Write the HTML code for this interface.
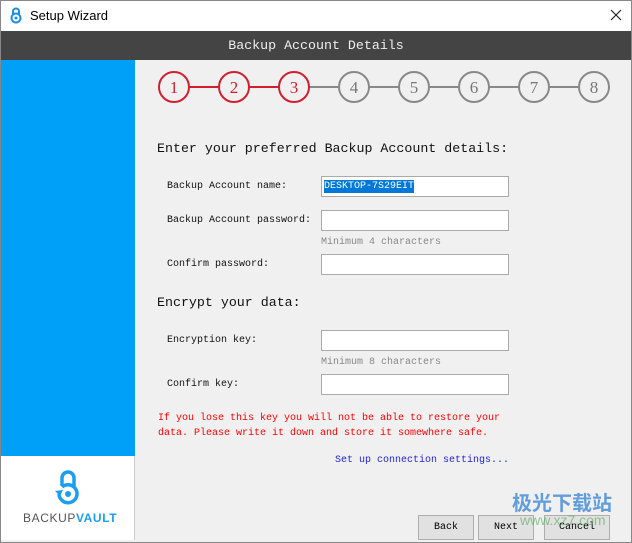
<!DOCTYPE html>
<html><head><meta charset="utf-8"><style>
*{margin:0;padding:0;box-sizing:border-box}
body{width:632px;height:543px;overflow:hidden;background:#f0f0f0;position:relative;font-family:"Liberation Mono",monospace}
.a{position:absolute;white-space:nowrap}
.win{position:absolute;left:0;top:0;width:632px;height:543px;border:1px solid #888}
.inp{position:absolute;left:321px;width:188px;height:21px;background:#fff;border:1px solid #aaa}
.lbl{font-size:10px;color:#111;left:167px}
.hint{font-size:10px;color:#888;left:321px}
.btn{position:absolute;top:515px;height:25px;border:1px solid #adadad;background:#e1e1e1;font-size:10px;text-align:center;line-height:23px;color:#000}
</style></head><body>
<div class="a" style="left:0;top:0;width:632px;height:31px;background:#fff"></div>
<svg class="a" style="left:9px;top:7px" width="14" height="17" viewBox="0 0 14 17"><path d="M4 7V4.5a3 3 0 0 1 6 0V7" fill="none" stroke="#1a8fe0" stroke-width="2"/><circle cx="7" cy="11" r="4.5" fill="none" stroke="#1a8fe0" stroke-width="2"/><circle cx="7" cy="11" r="1.5" fill="#1a8fe0"/></svg>
<div class="a" style="left:30px;top:8px;font:13px 'Liberation Sans',sans-serif;color:#000">Setup Wizard</div>
<svg class="a" style="left:610px;top:9px" width="12" height="12"><path d="M1 1L11 11M11 1L1 11" stroke="#222" stroke-width="1.2"/></svg>
<div class="a" style="left:1px;top:31px;width:630px;height:29px;background:#444"></div>
<div class="a" style="left:0;top:38px;width:632px;text-align:center;font-size:13.3px;color:#eee">Backup Account Details</div>
<div class="a" style="left:1px;top:60px;width:134px;height:396px;background:#00a0f8"></div>
<div class="a" style="left:1px;top:456px;width:134px;height:84px;background:#fff;border-right:1px solid #ccc"></div>
<svg class="a" style="left:53px;top:470px" width="30" height="36" viewBox="0 0 30 36"><path d="M9 16V8a6 6 0 0 1 12 0v8" fill="none" stroke="#1a9ef0" stroke-width="3.5"/><path d="M6 24a9 9 0 1 0 3-7" fill="none" stroke="#1a9ef0" stroke-width="3.5"/><path d="M2 21l5 5 3-6z" fill="#1a9ef0"/><circle cx="15" cy="24" r="3" fill="#1a9ef0"/></svg>
<div class="a" style="left:23px;top:511px;font:12px 'Liberation Sans',sans-serif;letter-spacing:0.6px;color:#555">BACKUP<span style="color:#1a9ef0;font-weight:bold">VAULT</span></div>
<svg class="a" style="left:150px;top:68px" width="470" height="40">
<line x1="24" y1="19" x2="144" y2="19" stroke="#d02030" stroke-width="2"/>
<line x1="144" y1="19" x2="444" y2="19" stroke="#888" stroke-width="2"/>
<g font-family="Liberation Serif,serif" font-size="17" text-anchor="middle">
<g fill="#f0f0f0" stroke="#d02030" stroke-width="2"><circle cx="24" cy="19" r="15"/><circle cx="84" cy="19" r="15"/><circle cx="144" cy="19" r="15"/></g>
<g fill="#f0f0f0" stroke="#888" stroke-width="2"><circle cx="204" cy="19" r="15"/><circle cx="264" cy="19" r="15"/><circle cx="324" cy="19" r="15"/><circle cx="384" cy="19" r="15"/><circle cx="444" cy="19" r="15"/></g>
<g fill="#d02030"><text x="24" y="25">1</text><text x="84" y="25">2</text><text x="144" y="25">3</text></g>
<g fill="#777"><text x="204" y="25">4</text><text x="264" y="25">5</text><text x="324" y="25">6</text><text x="384" y="25">7</text><text x="444" y="25">8</text></g>
</g></svg>
<div class="a" style="left:157px;top:141px;font-size:13.3px;color:#111">Enter your preferred Backup Account details:</div>
<div class="a lbl" style="top:181px">Backup Account name:</div>
<div class="inp" style="top:176px"><span style="position:absolute;left:2px;top:3px;background:#0078d7;color:#fff;font-size:10px;line-height:13px">DESKTOP-7S29EIT</span></div>
<div class="a lbl" style="top:215px">Backup Account password:</div>
<div class="inp" style="top:210px"></div>
<div class="a hint" style="top:237px">Minimum 4 characters</div>
<div class="a lbl" style="top:259px">Confirm password:</div>
<div class="inp" style="top:254px"></div>
<div class="a" style="left:157px;top:295px;font-size:13.3px;color:#111">Encrypt your data:</div>
<div class="a lbl" style="top:335px">Encryption key:</div>
<div class="inp" style="top:330px"></div>
<div class="a hint" style="top:357px">Minimum 8 characters</div>
<div class="a lbl" style="top:379px">Confirm key:</div>
<div class="inp" style="top:374px"></div>
<div class="a" style="left:158px;top:411px;font-size:10px;line-height:15px;color:#f00">If you lose this key you will not be able to restore your<br>data. Please write it down and store it somewhere safe.</div>
<div class="a" style="left:335px;top:455px;font-size:10px;color:#22d">Set up connection settings...</div>
<div class="btn" style="left:418px;width:56px">Back</div>
<div class="btn" style="left:478px;width:56px">Next</div>
<div class="btn" style="left:544px;width:66px">Cancel</div>
<div class="a" style="left:512px;top:487px;font:bold 20px 'Noto Sans CJK SC',sans-serif;color:#4a8fd8;opacity:0.85">极光下载站</div>
<div class="a" style="left:520px;top:512px;font:14px 'Liberation Sans',sans-serif;color:#5a5;opacity:0.6">www.xz7.com</div>
<div class="win"></div>
</body></html>
